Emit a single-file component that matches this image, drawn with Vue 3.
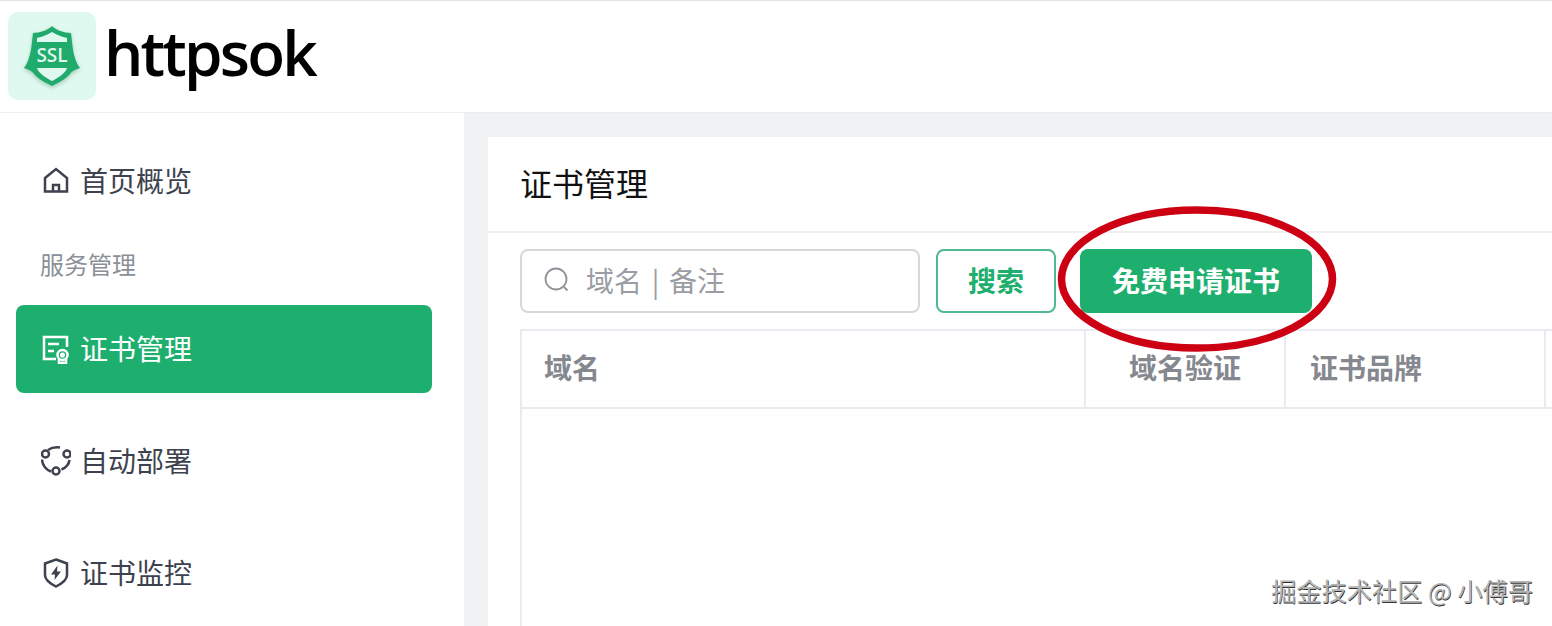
<template>
  <div class="page">
    <header class="top">
      <div class="logo">
        <svg viewBox="0 0 88 88" class="logo-svg">
          <path class="shield-dark" d="M44 14 C48 18 56 21 63 21 L64 30 C65 38 66 48 72 56 C66 58 63 60 62 62 C58 67 50 71 44 74 C38 71 30 67 26 62 C25 60 22 58 16 56 C22 48 23 38 24 30 L25 21 C32 21 40 18 44 14 Z" />
          <path class="shield-light" d="M44 20 C49 23 54 25 59 26 L59 30 L29 30 L29 26 C34 25 39 23 44 20 Z" />
          <path class="shield-light" d="M29 56 L59 56 C58 60 52 65 44 69 C36 65 30 60 29 56 Z" />
          <text x="44" y="50" text-anchor="middle" class="ssl">SSL</text>
        </svg>
      </div>
      <span class="brand">httpsok</span>
    </header>

    <div class="body">
      <aside class="side">
        <div class="menu-item">
          <svg viewBox="0 0 30 30" class="menu-icon">
            <path d="M4 12 L15 3 L26 12 V25.500 H4 Z M12 25.500 V19 H18 V25.500" />
          </svg>
          <span>首页概览</span>
        </div>
        <div class="menu-group">服务管理</div>
        <div class="menu-item active">
          <svg viewBox="0 0 30 30" class="menu-icon">
            <path d="M15 25 H3 V3 H26 V13 M7 10 H18 M7 17 H13" />
            <circle cx="21.500" cy="21" r="5" />
            <circle cx="21.500" cy="21" r="1.300" />
            <path d="M18 25 V30 L21.500 28.500 L25 30 V25" />
          </svg>
          <span>证书管理</span>
        </div>
        <div class="menu-item">
          <svg viewBox="0 0 30 30" class="menu-icon">
            <circle cx="4.500" cy="8" r="3.500" />
            <circle cx="26" cy="8" r="3.500" />
            <circle cx="15" cy="25" r="3.500" />
            <path d="M7 4 C10.500 1.500 15 1 19 1.500 M28.500 14 C28 18 25 21.500 20.500 23.500 M1 13.500 C1.500 19 5 23.500 10 25.500" />
          </svg>
          <span>自动部署</span>
        </div>
        <div class="menu-item">
          <svg viewBox="0 0 30 30" class="menu-icon">
            <path d="M15 1.500 L26 5.500 V17 C26 22 20 26 15 28.500 C10 26 4 22 4 17 V5.500 Z" />
            <path class="bolt" d="M16.500 7.500 L10 16.500 H14 L13.500 22 L20 13.500 H16 Z" />
          </svg>
          <span>证书监控</span>
        </div>
      </aside>

      <main class="main">
        <section class="card">
          <h1 class="card-title">证书管理</h1>
          <div class="content">
            <div class="toolbar">
              <div class="search">
                <svg viewBox="0 0 26 26" class="search-icon">
                  <circle cx="12" cy="12" r="10.500" />
                  <path d="M20 20 L23.500 23.500" />
                </svg>
                <span>域名 | 备注</span>
              </div>
              <button class="btn-outline">搜索</button>
              <button class="btn-primary">免费申请证书</button>
            </div>
            <div class="table">
              <div class="thead">
                <div class="th th-domain">域名</div>
                <div class="th th-verify">域名验证</div>
                <div class="th th-brand">证书品牌</div>
                <div class="th th-rest"></div>
              </div>
            </div>
          </div>
        </section>
      </main>
    </div>

    <svg class="ring" viewBox="0 0 284 150">
      <ellipse cx="142" cy="75" rx="135.500" ry="69" />
    </svg>
    <div class="watermark">掘金技术社区 @ 小傅哥</div>
  </div>
</template>

<script setup>
</script>

<style>
html, body {
  margin: 0;
  overflow: hidden;
}
</style>

<style scoped>
.page {
  position: relative;
  width: 1552px;
  height: 626px;
  overflow: hidden;
  background: #fff;
  font-family: "Noto Sans CJK SC", "Noto Sans", sans-serif;
}

.top {
  display: flex;
  align-items: center;
  box-sizing: border-box;
  height: 113px;
  padding: 0 0 2px 8px;
  border-top: 1px solid #e3e3e3;
  border-bottom: 1px solid #ececec;
}

.logo {
  width: 88px;
  height: 88px;
  border-radius: 10px;
  background: #e0f9f0;
}

.logo-svg {
  display: block;
  width: 88px;
  height: 88px;
}

.shield-dark {
  fill: #20aa6c;
  filter: drop-shadow(0 2px 2px rgba(20, 110, 70, 0.3));
}

.shield-light {
  fill: #e0f9f0;
}

.ssl {
  fill: #dff7ec;
  font-family: "Open Sans", sans-serif;
  font-size: 19px;
  font-weight: 600;
}

.brand {
  margin-left: 8px;
  margin-top: -8px;
  font-family: "Open Sans", sans-serif;
  font-size: 62px;
  font-weight: 600;
  letter-spacing: -2.800px;
  line-height: 88px;
  color: #000;
}

.body {
  display: flex;
  height: 513px;
}

.side {
  box-sizing: border-box;
  width: 464px;
  padding: 24px 32px 0 16px;
  flex-shrink: 0;
}

.menu-item {
  display: flex;
  align-items: center;
  box-sizing: border-box;
  height: 88px;
  margin-bottom: 24px;
  padding: 0 0 0 25px;
  border-radius: 8px;
  font-size: 28px;
  color: #3d424e;
}

.menu-item span {
  margin-top: -3px;
}

.menu-item:first-child {
  margin-bottom: 0;
}

.menu-item.active {
  background: #1eaf6e;
  color: #fff;
}

.menu-icon {
  width: 30px;
  height: 30px;
  margin-right: 9px;
  fill: none;
  stroke: currentColor;
  stroke-width: 2.500;
  flex-shrink: 0;
}

.bolt {
  fill: currentColor;
  stroke: none;
}

.menu-group {
  height: 80px;
  line-height: 78px;
  padding-left: 24px;
  font-size: 24px;
  color: #8b8f97;
}

.main {
  flex: 1;
  min-width: 0;
  padding: 24px 0 0 24px;
  background: #f0f2f4;
}

.card {
  height: 100%;
  background: #fff;
}

.card-title {
  box-sizing: border-box;
  height: 96px;
  margin: 0;
  padding-left: 32px;
  border-bottom: 2px solid #f0f0f0;
  font-size: 32px;
  font-weight: 400;
  line-height: 91px;
  color: #111;
}

.content {
  padding: 16px 0 0 32px;
}

.toolbar {
  display: flex;
  height: 64px;
  margin-bottom: 16px;
}

.search {
  display: flex;
  align-items: center;
  box-sizing: border-box;
  width: 400px;
  margin-right: 16px;
  padding: 0 0 2px 22px;
  border: 2px solid #d6d8dc;
  border-radius: 8px;
  font-size: 28px;
  word-spacing: 3.500px;
  color: #9a9da3;
}

.search-icon {
  width: 26px;
  height: 26px;
  margin-right: 16px;
  fill: none;
  stroke: #8f9298;
  stroke-width: 1.800;
}

.btn-outline,
.btn-primary {
  font-family: inherit;
  font-size: 28px;
  font-weight: 700;
  border-radius: 8px;
  padding: 0 0 2px;
}

.btn-outline {
  box-sizing: border-box;
  width: 120px;
  margin-right: 24px;
  border: 2px solid #4fb98f;
  background: #fff;
  color: #1eaf6e;
}

.btn-primary {
  width: 232px;
  border: 0;
  background: #1eaf6e;
  color: #fff;
}

.table {
  height: 400px;
  border-top: 2px solid #e9ebf0;
  border-left: 2px solid #e9ebf0;
}

.thead {
  display: flex;
  height: 76px;
  border-bottom: 2px solid #e9ebf0;
}

.th {
  box-sizing: border-box;
  border-right: 2px solid #e9ebf0;
  font-size: 28px;
  font-weight: 700;
  line-height: 73px;
  color: #85888e;
}

.th-domain {
  width: 564px;
  padding-left: 22px;
}

.th-verify {
  width: 200px;
  padding-right: 43px;
  text-align: right;
}

.th-brand {
  width: 260px;
  padding-left: 24px;
}

.th-rest {
  flex: 1;
  border-right: 0;
}

.ring {
  position: absolute;
  left: 1055px;
  top: 204px;
  width: 284px;
  height: 150px;
  fill: none;
  stroke: #cc0012;
  stroke-width: 7.500;
}

.watermark {
  position: absolute;
  right: 19px;
  top: 574px;
  font-size: 25.200px;
  line-height: 32px;
  color: #b4b4b4;
  text-shadow: 0.6px 0.6px 0.6px #333;
  white-space: nowrap;
}
</style>
